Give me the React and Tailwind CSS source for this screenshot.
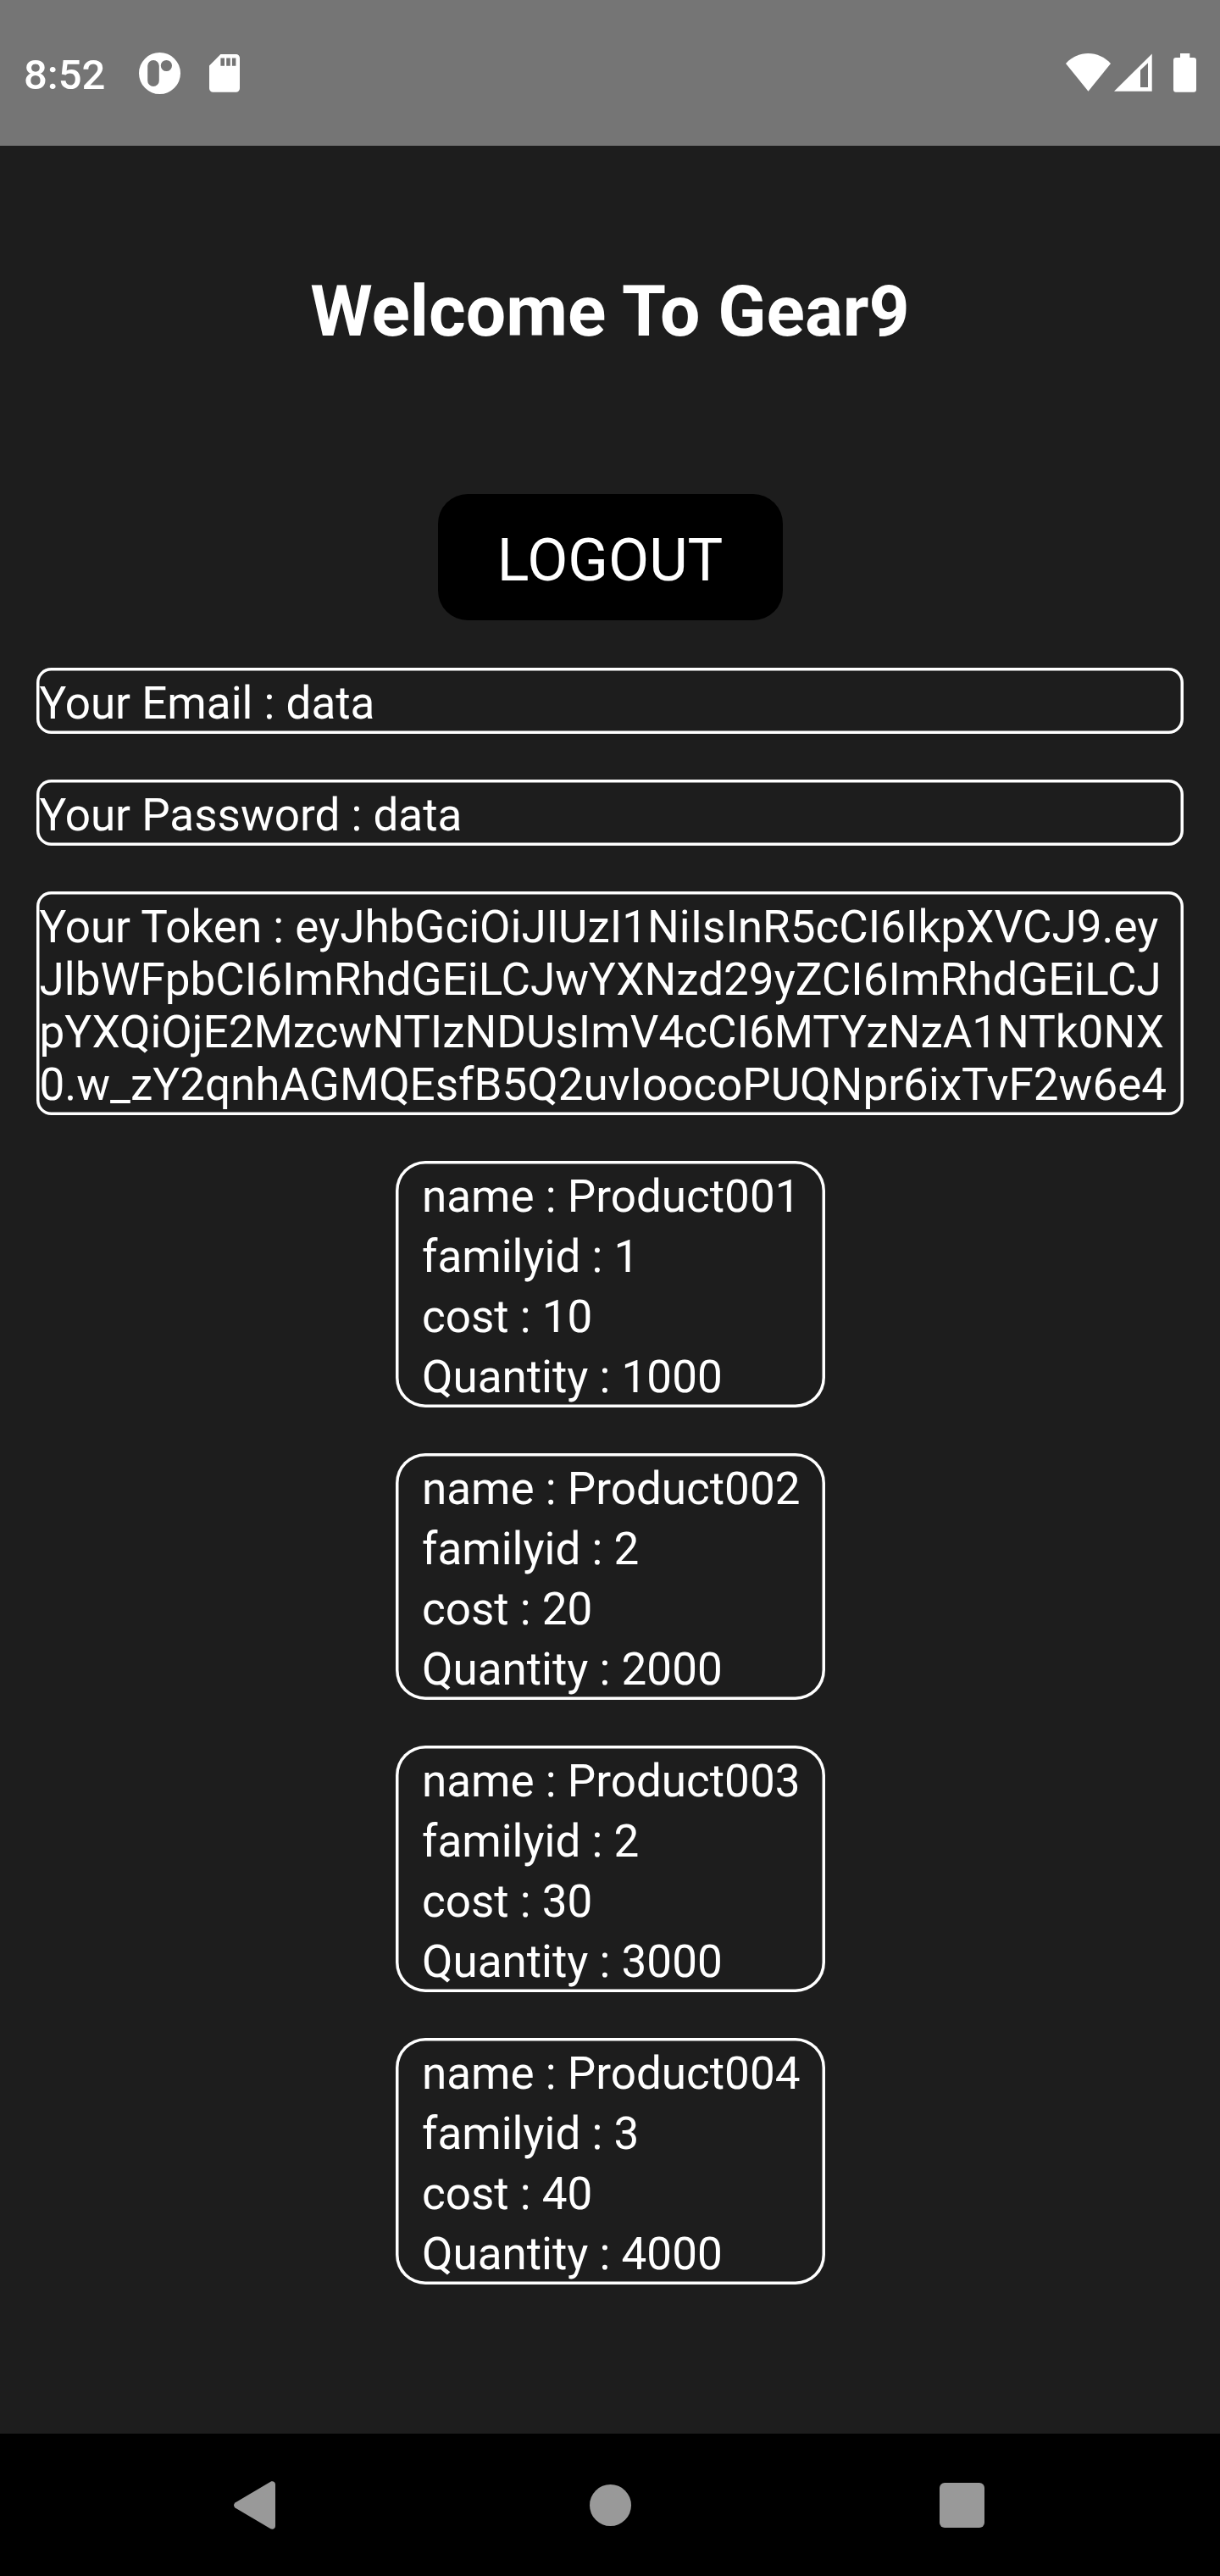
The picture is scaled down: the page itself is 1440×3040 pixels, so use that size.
const TOKEN_LINES = [
  'Your Token : eyJhbGciOiJIUzI1NiIsInR5cCI6IkpXVCJ9.ey',
  'JlbWFpbCI6ImRhdGEiLCJwYXNzd29yZCI6ImRhdGEiLCJ',
  'pYXQiOjE2MzcwNTIzNDUsImV4cCI6MTYzNzA1NTk0NX',
  '0.w_zY2qnhAGMQEsfB5Q2uvIoocoPUQNpr6ixTvF2w6e4',
];

const PRODUCTS = [
  { name: 'Product001', familyid: 1, cost: 10, quantity: 1000 },
  { name: 'Product002', familyid: 2, cost: 20, quantity: 2000 },
  { name: 'Product003', familyid: 2, cost: 30, quantity: 3000 },
  { name: 'Product004', familyid: 3, cost: 40, quantity: 4000 },
];

function StatusBar() {
  return (
    <header className="flex h-[172px] items-start justify-between bg-[#757575] pl-[28px] pr-[28px] pt-[60px]">
      <div className="flex items-start">
        <span className="w-[136px] text-[49px] font-medium leading-[57px]">8:52</span>
        <svg className="mt-[2px]" width="49" height="49" viewBox="0 0 49 49">
          <path
            fill="#fff"
            fillRule="evenodd"
            d="M24.5 0a24.5 24.5 0 1 0 0 49a24.5 24.5 0 1 0 0-49zM17 9a6.8 6.8 0 0 1 6.8 6.8v17.4a6.8 6.8 0 0 1-13.6 0V15.8A6.8 6.8 0 0 1 17 9zM32.4 8.9a6.6 6.6 0 1 1 0 13.2a6.6 6.6 0 1 1 0-13.2z"
          />
        </svg>
        <svg className="ml-[34px] mt-[4px]" width="36" height="45" viewBox="0 0 36 45">
          <path
            fill="#fff"
            fillRule="evenodd"
            d="M13.4 0H31.5A4.4 4.4 0 0 1 36 4.4V40.3A4.4 4.4 0 0 1 31.5 44.7H4.5A4.4 4.4 0 0 1 0 40.3V13.4zM13.4 4.5V13.7H18V4.5zM20.2 4.5V13.7H24.8V4.5zM26.9 4.5V13.7H31.4V4.5z"
          />
        </svg>
      </div>
      <div className="flex items-start pt-[3px]">
        <svg width="53" height="45" viewBox="0 0 53 45">
          <path fill="#fff" d="M26.5 44.7L0 12C7 4.4 16.5 0 26.5 0S46 4.4 53 12z" />
        </svg>
        <svg className="ml-[4px]" width="45" height="45" viewBox="0 0 45 45">
          <path fill="#fff" fillRule="evenodd" d="M0 44.7L44.7 .5V44.7zM31 19.7V39.9H40V11.2z" />
        </svg>
        <svg className="ml-[25px]" width="27" height="46" viewBox="0 0 27 46">
          <path
            fill="#fff"
            d="M8 0H19.3V5H24A3 3 0 0 1 27 8V42.7A3 3 0 0 1 24 45.7H3A3 3 0 0 1 0 42.7V8A3 3 0 0 1 3 5H8z"
          />
        </svg>
      </div>
    </header>
  );
}

function Field({ children }) {
  return (
    <div className="w-full rounded-[17.5px] pb-[5px] pl-[3.5px] pt-[11px] text-[53px] leading-[62px] shadow-[inset_0_0_0_3.5px_#fff]">
      {children}
    </div>
  );
}

function ProductCard({ product }) {
  return (
    <li className="h-[291px] w-[507px] rounded-[35px] pl-[31.5px] pt-[7px] text-[53px] leading-[71px] shadow-[inset_0_0_0_3.5px_#fff]">
      <p>name : {product.name}</p>
      <p>familyid : {product.familyid}</p>
      <p>cost : {product.cost}</p>
      <p>Quantity : {product.quantity}</p>
    </li>
  );
}

function NavBar() {
  return (
    <nav className="flex h-[168px] items-center justify-between bg-black pl-[276px] pr-[278px]">
      <svg width="50" height="57" viewBox="0 0 50 57">
        <path fill="#999" d="M1.5 25.4L43.4 .7C46 -.6 49 1 49 4V53C49 56 46 57.6 43.4 56.3L1.5 31.6Q-1.5 28.5 1.5 25.4z" />
      </svg>
      <span className="ml-[5px] h-[49px] w-[49px] rounded-full bg-[#999]" />
      <span className="h-[53px] w-[53px] rounded-[6px] bg-[#999]" />
    </nav>
  );
}

export default function App() {
  return (
    <div className="flex h-[3040px] w-[1440px] flex-col overflow-hidden bg-[#1d1d1d] font-['Roboto',sans-serif] text-white">
      <StatusBar />
      <main className="flex flex-1 flex-col items-center px-[43px]">
        <h1 className="mt-[146px] text-[84px] font-bold leading-[100px]">Welcome To Gear9</h1>
        <button className="mt-[165px] h-[149px] w-[407px] rounded-[35px] bg-black pt-[7px] text-[70px] leading-[82px]">
          LOGOUT
        </button>
        <section className="mt-[56px] flex w-full flex-col gap-[54px]">
          <Field>Your Email : data</Field>
          <Field>Your Password : data</Field>
          <Field>
            {TOKEN_LINES.map((line) => (
              <span key={line} className="block whitespace-nowrap">
                {line}
              </span>
            ))}
          </Field>
        </section>
        <ul className="mt-[54px] flex flex-col gap-[54px]">
          {PRODUCTS.map((product) => (
            <ProductCard key={product.name} product={product} />
          ))}
        </ul>
      </main>
      <NavBar />
    </div>
  );
}
